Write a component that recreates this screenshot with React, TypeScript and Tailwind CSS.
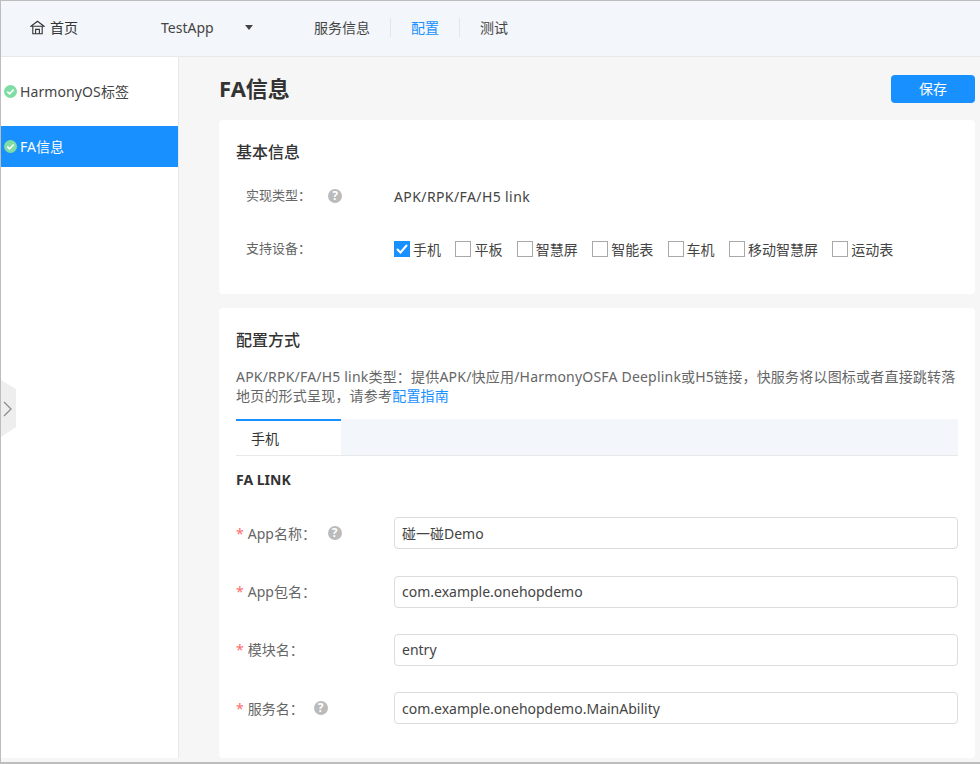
const devices = [
  { name: "手机", checked: true },
  { name: "平板" },
  { name: "智慧屏" },
  { name: "智能表" },
  { name: "车机" },
  { name: "移动智慧屏" },
  { name: "运动表" },
];

const fields = [
  { label: "App名称：", value: "碰一碰Demo", width: "w-[80px]", help: true },
  { label: "App包名：", value: "com.example.onehopdemo", width: "w-[80px]" },
  { label: "模块名：", value: "entry", width: "w-[66px]" },
  { label: "服务名：", value: "com.example.onehopdemo.MainAbility", width: "w-[66px]", help: true },
];

function Help() {
  return (
    <span className="flex h-[14px] w-[14px] items-center justify-center rounded-full bg-[#bbbbbb] text-[12px] font-bold leading-none text-white">
      ?
    </span>
  );
}

function Check() {
  return (
    <svg viewBox="0 0 13 13" className="h-[13px] w-[13px] shrink-0" fill="none">
      <circle cx="6.5" cy="6.5" r="6.5" fill="#7fdca4" />
      <path d="M3.3 6.7l2.3 2.2 4.1-4.4" stroke="#fff" strokeWidth="1.7" />
    </svg>
  );
}

function HomeIcon() {
  return (
    <svg viewBox="0 0 15 15" className="h-[15px] w-[15px]" fill="none" stroke="#333333" strokeWidth="1.1">
      <path d="M1 6.2L7.5 1.2 14 6.2z" />
      <path d="M2.8 6.2v7.6h9.4V6.2" />
      <path d="M5.6 13.8V9.4h3.8v4.4" />
    </svg>
  );
}

export default function App() {
  return (
    <div
      className="flex h-[764px] w-[980px] flex-col overflow-hidden border-t border-b-2 border-l border-[#bdbdbd] bg-[#f6f6f6] text-[14px] text-[#333333]"
      style={{ fontFamily: '"Noto Sans", "Noto Sans CJK SC", sans-serif' }}
    >
      <header className="flex h-[56px] shrink-0 items-center border-b border-[#e6e8ea] bg-[#f3f6fa] pb-[3px]">
        <div className="ml-[29px] flex w-[131px] items-center gap-[5px]">
          <HomeIcon />
          <span>首页</span>
        </div>
        <span className="w-[84px] text-[#444444]">TestApp</span>
        <span className="h-0 w-0 border-x-[4px] border-t-[5px] border-x-transparent border-t-[#444444]" />
        <span className="ml-[61px] text-[#444444]">服务信息</span>
        <span className="mx-[20px] h-[19px] w-px bg-[#e3e6e9]" />
        <span className="text-[#1890ff]">配置</span>
        <span className="mx-[20px] h-[19px] w-px bg-[#e3e6e9]" />
        <span className="text-[#444444]">测试</span>
      </header>

      <div className="relative flex min-h-0 flex-1">
        <aside className="h-[701px] w-[178px] shrink-0 border-r border-[#e8e8e8] bg-white pt-[14px]">
          <div className="flex h-[41px] items-center gap-[3px] pl-[3px] text-[#444444]">
            <Check />
            <span className="tracking-[0.1px]">HarmonyOS标签</span>
          </div>
          <div className="mt-[14px] flex h-[41px] items-center gap-[3px] bg-[#1890ff] pl-[3px] text-white">
            <Check />
            <span>FA信息</span>
          </div>
        </aside>

        <svg viewBox="0 0 15 57" className="absolute left-0 top-[323px] h-[57px] w-[15px]">
          <path d="M0 0l15 9v38L0 57z" fill="#eeeeee" />
          <path d="M3 22l7 7-7 7" fill="none" stroke="#888888" strokeWidth="1.2" />
        </svg>

        <main className="min-w-0 flex-1 pl-[40px] pr-[5px]">
          <div className="flex h-[63px] items-center justify-between">
            <h1 className="text-[22px] font-bold text-[#333333]">FA信息</h1>
            <button className="h-[28px] w-[84px] rounded-[4px] bg-[#1890ff] text-[14px] text-white">保存</button>
          </div>

          <section className="h-[174px] rounded-[4px] bg-white px-[17px] pt-[20px]">
            <h2 className="text-[16px] font-medium leading-[24px] text-[#333333]">基本信息</h2>
            <div className="mt-[12px] flex h-[40px] items-center pl-[10px]">
              <span className="w-[82px] text-[13px] text-[#666666]">实现类型：</span>
              <Help />
              <span className="ml-[52px] tracking-[0.4px] text-[#444444]">APK/RPK/FA/H5 link</span>
            </div>
            <div className="mt-[13px] flex h-[40px] items-center pl-[10px]">
              <span className="w-[148px] text-[13px] text-[#666666]">支持设备：</span>
              <div className="flex gap-[14.4px]">
                {devices.map((d) => (
                  <label key={d.name} className="flex items-center gap-[3px] text-[#444444]">
                    {d.checked ? (
                      <span className="flex h-[16px] w-[16px] items-center justify-center bg-[#1890ff]">
                        <svg viewBox="0 0 16 16" className="h-[16px] w-[16px]" fill="none" stroke="#fff" strokeWidth="2">
                          <path d="M3 8l3.5 3.5L13 4" />
                        </svg>
                      </span>
                    ) : (
                      <span className="h-[16px] w-[16px] border border-[#a9a9a9] bg-white" />
                    )}
                    {d.name}
                  </label>
                ))}
              </div>
            </div>
          </section>

          <section className="mt-[14px] h-[450px] rounded-[4px] bg-white px-[17px] pt-[20px]">
            <h2 className="text-[16px] font-medium leading-[24px] text-[#333333]">配置方式</h2>
            <p className="mt-[15px] text-[14px] leading-[19px] tracking-[0.2px] text-[#666666]">
              APK/RPK/FA/H5 link类型：提供APK/快应用/HarmonyOSFA Deeplink或H5链接，快服务将以图标或者直接跳转落地页的形式呈现，请参考
              <span className="text-[#1890ff]">配置指南</span>
            </p>
            <div className="mt-[14px] flex h-[37px] border-b border-[#e8e8e8] bg-[#f3f6fa]">
              <div className="flex w-[105px] items-center border-t-2 border-[#1890ff] bg-white pl-[15px] text-[#333333]">手机</div>
            </div>
            <h3 className="mt-[14px] text-[14px] font-bold leading-[20px] text-[#333333]">FA LINK</h3>
            <div className="mt-[27.2px] flex flex-col gap-[26.4px]">
              {fields.map((f) => (
                <div key={f.label} className="flex h-[32px] items-center">
                  <span className="mr-[4px] text-[#ff6b6b]">*</span>
                  <span className={`text-[#666666] ${f.width}`}>{f.label}</span>
                  {f.help ? <Help /> : null}
                  <input
                    readOnly
                    value={f.value}
                    className="ml-auto h-[32px] w-[564px] rounded-[4px] border border-[#dcdcdc] bg-white px-[7px] text-[#444444] outline-none"
                  />
                </div>
              ))}
            </div>
          </section>
        </main>
      </div>
    </div>
  );
}
